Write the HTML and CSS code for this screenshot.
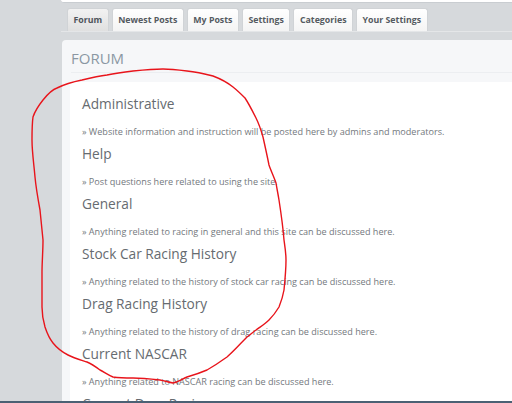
FILE: index.html
```html
<html>
  <head>
    <link rel="stylesheet" href="styles.css">
  </head>
  <body>
    <div class="page">
      <div class="top-panel"></div>

      <ul class="tabs">
        <li class="tab active">Forum</li>
        <li class="tab">Newest Posts</li>
        <li class="tab">My Posts</li>
        <li class="tab">Settings</li>
        <li class="tab">Categories</li>
        <li class="tab">Your Settings</li>
      </ul>

      <div class="forum-panel">
        <h2 class="panel-title">Forum</h2>
        <div class="panel-body">
          <div class="category">
            <h3>Administrative</h3>
            <p>&raquo; Website information and instruction will be posted here by admins and moderators.</p>
          </div>
          <div class="category">
            <h3>Help</h3>
            <p>&raquo; Post questions here related to using the site.</p>
          </div>
          <div class="category">
            <h3>General</h3>
            <p>&raquo; Anything related to racing in general and this site can be discussed here.</p>
          </div>
          <div class="category">
            <h3>Stock Car Racing History</h3>
            <p>&raquo; Anything related to the history of stock car racing can be discussed here.</p>
          </div>
          <div class="category">
            <h3>Drag Racing History</h3>
            <p>&raquo; Anything related to the history of drag racing can be discussed here.</p>
          </div>
          <div class="category">
            <h3>Current NASCAR</h3>
            <p>&raquo; Anything related to NASCAR racing can be discussed here.</p>
          </div>
          <div class="category">
            <h3>Current Drag Racing</h3>
            <p>&raquo; Anything related to current drag racing can be discussed here.</p>
          </div>
        </div>
      </div>
    </div>

    <!-- hand drawn red loop over the category list -->
    <svg class="scribble" width="512" height="403" viewBox="0 0 512 403">
      <path d="M43 100 C 47 95, 51 90, 57 88 C 65 84, 72 82, 82 80 C 90 78, 98 76, 107 75 C 116 73, 124 72, 133 71 C 143 70, 153 69, 163 69 C 171 69, 179 70, 187 71 C 196 72, 205 74, 213 76 C 221 79, 228 83, 233 87 C 238 91, 242 95, 245 98 C 249 104, 252 110, 256 118 C 259 124, 261 130, 263 137 C 265 146, 267 155, 269 165 C 271 171, 274 177, 276 183 C 277 189, 278 194, 279 200 C 281 213, 283 227, 284 240 C 285 247, 286 253, 286 260 C 286 270, 285 280, 284 290 C 283 296, 281 302, 279 307 C 276 312, 273 316, 269 320 C 265 324, 260 327, 256 330 C 253 332, 250 335, 247 337 C 240 344, 234 351, 227 357 C 220 362, 214 366, 207 370 C 200 373, 194 375, 187 377 C 182 379, 178 382, 173 383 C 168 382, 165 381, 160 380 C 151 379, 142 378, 133 378 C 126 378, 120 378, 113 377 C 108 375, 104 372, 100 370 C 96 367, 92 364, 87 362 C 81 360, 74 358, 68 355 C 62 352, 57 348, 53 343 C 49 338, 47 333, 45 327 C 43 320, 42 314, 42 307 C 42 296, 42 284, 42 273 C 42 262, 43 251, 43 240 C 42 230, 41 220, 40 210 C 38 199, 36 188, 35 177 C 34 165, 32 152, 32 140 C 32 132, 32 124, 33 117 C 35 111, 39 105, 43 100" fill="none" stroke="#e8141b" stroke-width="1.4" stroke-linecap="round"/>
    </svg>

    <div class="taskbar"></div>
  </body>
</html>
```

FILE: styles.css
```css
body { margin: 0; background: #d6d9dc; font-family: "Open Sans", Arial, sans-serif; height: 403px; overflow: hidden; }
.page { margin-left: 61px; }
.top-panel { height: 2px; background: #fff; border-bottom: 1px solid #c9cdd1; border-radius: 0 0 0 4px; }
.tabs { list-style: none; margin: 5px 0 0 0; padding: 0 0 0 6px; display: flex; gap: 3px; border-bottom: 1px solid #e4e6e8; height: 23px; }
.tab { height: 23px; line-height: 22px; padding: 0 5.5px; box-sizing: border-box; font-size: 8.8px; font-weight: bold; color: #555b61; background: linear-gradient(#ffffff, #f4f4f4); border: 1px solid #d0d3d6; border-bottom: none; border-radius: 3px 3px 0 0; }
.tab.active { background: linear-gradient(#f2f2f2, #e0e0e0); color: #4f555b; }
.forum-panel { margin: 8px 0 0 1px; background: #f6f7f9; border-radius: 4px 0 0 0; }
.panel-title { margin: 0 0 0 9px; padding: 9px 0 5px 0; height: 18px; font-size: 15px; font-weight: normal; text-transform: uppercase; color: #8b97a3; line-height: 18px; border-bottom: 1px solid #eceef1; }
.panel-body { margin: 9px 0 0 8px; background: #fff; padding: 9px 0 0 12px; height: 400px; }
.category { height: 50px; }
.category h3 { margin: 0; font-size: 13.7px; font-weight: normal; color: #666b70; line-height: 26px; }
.category p { margin: 0; padding-top: 8px; font-size: 9.1px; color: #73787d; line-height: 14px; }
.scribble { position: absolute; left: 0; top: 0; pointer-events: none; }
.taskbar { position: fixed; left: 0; right: 0; bottom: 0; height: 2px; background: #4b6174; }
```
